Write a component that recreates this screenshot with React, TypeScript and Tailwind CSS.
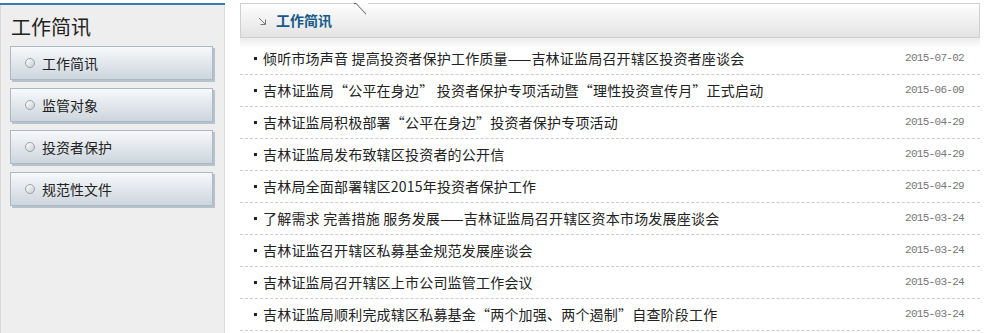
const MENU = ['工作简讯', '监管对象', '投资者保护', '规范性文件'];

const NEWS = [
  { title: '倾听市场声音 提高投资者保护工作质量——吉林证监局召开辖区投资者座谈会', date: '2015-07-02' },
  { title: '吉林证监局“公平在身边” 投资者保护专项活动暨“理性投资宣传月”正式启动', date: '2015-06-09' },
  { title: '吉林证监局积极部署“公平在身边”投资者保护专项活动', date: '2015-04-29' },
  { title: '吉林证监局发布致辖区投资者的公开信', date: '2015-04-29' },
  { title: '吉林局全面部署辖区2015年投资者保护工作', date: '2015-04-29' },
  { title: '了解需求 完善措施 服务发展——吉林证监局召开辖区资本市场发展座谈会', date: '2015-03-24' },
  { title: '吉林证监召开辖区私募基金规范发展座谈会', date: '2015-03-24' },
  { title: '吉林证监局召开辖区上市公司监管工作会议', date: '2015-03-24' },
  { title: '吉林证监局顺利完成辖区私募基金“两个加强、两个遏制”自查阶段工作', date: '2015-03-24' },
];

const cjk = "font-['SimSun','Noto_Sans_CJK_SC',sans-serif]";

function Radio() {
  return (
    <span className="w-[10px] h-[10px] rounded-full border border-[#9aa3ab] bg-gradient-to-br from-[#ffffff] to-[#c9ced3] shrink-0" />
  );
}

export default function App() {
  return (
    <div className={`w-[991px] h-[333px] bg-white flex overflow-hidden ${cjk}`}>
      {/* Left column */}
      <div className="w-[225px] pt-[3px] shrink-0 flex flex-col">
        <div className="h-[2px] bg-[#3b7ab0]" />
        <div className="flex-1 bg-[#eeeeee] border-l border-[#d8d8d8] border-r border-r-[#dcdcdc] pl-[9px]">
          <h2 className="text-[20px] leading-[26px] text-[#222] pt-[9px] pl-[1px]">工作简讯</h2>
          <div className="flex flex-col gap-[8px] mt-[6px]">
            {MENU.map((m) => (
              <div
                key={m}
                className="w-[203px] h-[34px] flex items-center gap-[7px] pl-[14px] border border-[#a9b9c8] bg-gradient-to-b from-[#f7f9fb] to-[#cdd5dd] shadow-[2px_2px_0_#b7c2cc]"
              >
                <Radio />
                <span className="text-[14px] text-[#222]">{m}</span>
              </div>
            ))}
          </div>
        </div>
      </div>

      {/* Right column */}
      <div className="w-[740px] ml-[15px] pt-[3px] flex flex-col">
        <div className="relative h-[35px] border border-[#cfcfcf] bg-gradient-to-b from-[#fefefe] to-[#e3e3e3] flex items-center pl-[17px]">
          <svg width="9" height="9" viewBox="0 0 9 9" className="mr-[9px] mt-[2px]">
            <path d="M1 1 L7 7 M2.5 7.5 H7.5 V2.5" stroke="#777" strokeWidth="1" fill="none" />
          </svg>
          <span className="text-[14px] font-bold text-[#165a8c]">工作简讯</span>
          <svg width="14" height="14" viewBox="0 0 14 14" className="absolute left-[113px] top-[-1px]">
            <path d="M0 0.5 H2 L12 11" stroke="#555" strokeWidth="1" fill="none" />
            <path d="M2 0.5 L12 11 L12 13 Z" fill="#bbb" opacity="0.5" />
            <rect x="3" y="0" width="11" height="1" fill="#fff" />
          </svg>
        </div>
        <div className="relative">
          <div className="absolute inset-x-0 top-0 h-[10px] bg-gradient-to-b from-[#ececec] to-transparent" />
          <ul className="relative pt-[5px]">
            {NEWS.map((n) => (
              <li
                key={n.title}
                className="h-[32px] flex items-center border-b border-dashed border-[#cccccc] pl-[14px] pr-[16px]"
              >
                <span className="w-[3px] h-[3px] bg-[#222] mr-[6px] shrink-0" />
                <span className="flex-1 text-[14px] tracking-[0.2px] text-[#222] whitespace-nowrap">{n.title}</span>
                <span className="text-[11px] tracking-[-0.7px] text-[#777] font-['Liberation_Mono',monospace]">{n.date}</span>
              </li>
            ))}
          </ul>
        </div>
      </div>
    </div>
  );
}
